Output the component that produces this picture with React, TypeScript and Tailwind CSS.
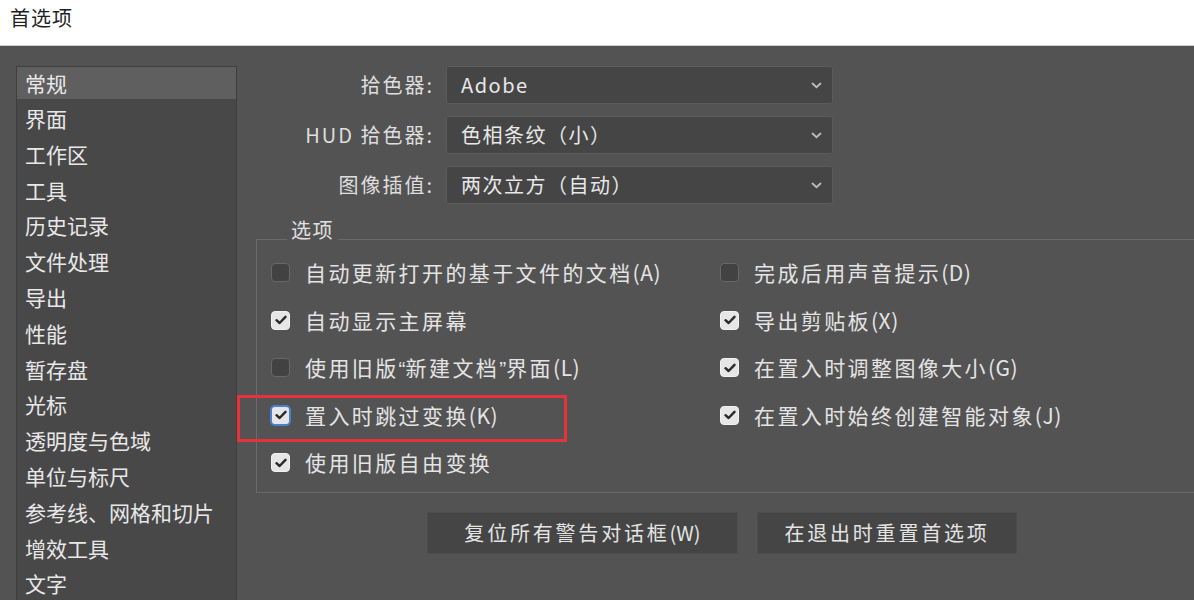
import React from 'react';

const font = { fontFamily: '"Noto Sans CJK SC", "Noto Sans", sans-serif' };

const navItems = [
  '常规', '界面', '工作区', '工具', '历史记录', '文件处理', '导出', '性能',
  '暂存盘', '光标', '透明度与色域', '单位与标尺', '参考线、网格和切片', '增效工具', '文字',
];

const pickers = [
  { label: '拾色器:', value: 'Adobe' },
  { label: 'HUD 拾色器:', value: '色相条纹（小）' },
  { label: '图像插值:', value: '两次立方（自动）' },
];

type Opt = { text: React.ReactNode; id: string; key?: string; checked: boolean; focus?: boolean };

const Q: React.FC<{ c: string }> = ({ c }) => (
  <span className="tracking-[0px]" style={{ fontFamily: '"Liberation Sans", sans-serif' }}>{c}</span>
);

const leftOpts: Opt[] = [
  { id: 'a', text: '自动更新打开的基于文件的文档', key: '(A)', checked: false },
  { id: 'b', text: '自动显示主屏幕', checked: true },
  {
    id: 'c',
    text: <>使用旧版<Q c="“" />新建文档<Q c="”" />界面</>,
    key: '(L)',
    checked: false,
  },
  { id: 'd', text: '置入时跳过变换', key: '(K)', checked: true, focus: true },
  { id: 'e', text: '使用旧版自由变换', checked: true },
];

const rightOpts: Opt[] = [
  { id: 'f', text: '完成后用声音提示', key: '(D)', checked: false },
  { id: 'g', text: '导出剪贴板', key: '(X)', checked: true },
  { id: 'h', text: '在置入时调整图像大小', key: '(G)', checked: true },
  { id: 'i', text: '在置入时始终创建智能对象', key: '(J)', checked: true },
];

const Checkbox: React.FC<{ checked: boolean; focus?: boolean }> = ({ checked, focus }) => (
  <span
    className={`flex w-[19px] h-[19px] shrink-0 items-center justify-center rounded-[4px] border ${
      checked ? 'bg-[#e6e6e6] border-[#f2f2f2]' : 'bg-[#424242] border-[#686868]'
    } ${focus ? 'outline outline-2 outline-[#4d7fd1] -outline-offset-1' : ''}`}
  >
    {checked && (
      <svg width="12" height="10" viewBox="0 0 12 10">
        <path d="M1.5 5.2 L4.6 8 L10.5 1.8" fill="none" stroke="#2a2a2a" strokeWidth="2.4" strokeLinecap="round" strokeLinejoin="round" />
      </svg>
    )}
  </span>
);

const OptionRow: React.FC<{ opt: Opt }> = ({ opt }) => (
  <div className="relative flex h-[47.5px] items-center gap-[15px]">
    <Checkbox checked={opt.checked} focus={opt.focus} />
    <span className="text-[21px] tracking-[2.4px] text-[#e4e4e4] whitespace-nowrap">
      {opt.text}
      {opt.key && <span className="tracking-[0.5px]">{opt.key}</span>}
    </span>
    {opt.focus && (
      <span className="absolute left-[-34px] top-[3px] w-[330px] h-[47px] border-[3px] border-[#e5323b] pointer-events-none" />
    )}
  </div>
);

export default function App() {
  return (
    <div className="w-[1194px] h-[600px] overflow-hidden flex flex-col bg-[#535353]" style={font}>
      {/* title bar */}
      <div className="h-[46px] shrink-0 bg-white border-b border-[#cfcfcf] pl-[10px] pt-[4px]">
        <span className="text-[20px] leading-[28px] tracking-[1px] text-[#1f1f1f]">首选项</span>
      </div>

      <div className="flex flex-1 pt-[20px]">
        {/* sidebar */}
        <div className="ml-[16px] w-[221px] h-[600px] shrink-0 bg-[#484848] border border-[#3f3f3f]">
          {navItems.map((item, i) => (
            <div
              key={item}
              className={`pl-[8px] text-[21px] text-[#e8e8e8] whitespace-nowrap ${
                i === 0 ? 'h-[32px] leading-[32px] bg-[#5f5f5f] mb-[2px]' : 'h-[35.8px] leading-[35.8px]'
              }`}
            >
              {item}
            </div>
          ))}
        </div>

        {/* main */}
        <div className="ml-[19px] flex-1 flex flex-col">
          <div className="flex flex-col gap-[12px]">
            {pickers.map(p => (
              <div key={p.label} className="flex items-center gap-[12px]">
                <div className="w-[178px] text-right text-[20px] tracking-[2px] text-[#dedede] whitespace-nowrap">
                  {p.label}
                </div>
                <div className="w-[387px] h-[38px] flex items-center justify-between pl-[14px] pr-[10px] rounded-[3px] bg-[#454545] border border-[#5b5b5b]">
                  <span className="text-[20px] tracking-[1.5px] text-[#e8e8e8]">{p.value}</span>
                  <svg width="11" height="7" viewBox="0 0 11 7">
                    <path d="M1.5 1.5 L5.5 5.2 L9.5 1.5" fill="none" stroke="#bdbdbd" strokeWidth="1.8" strokeLinecap="round" />
                  </svg>
                </div>
              </div>
            ))}
          </div>

          <fieldset className="mt-[16px] w-[960px] border border-[#6a6a6a] pl-[14px] pb-[5px]">
            <legend className="ml-[16px] px-[4px] pb-[18px] text-[20px] leading-[20px] tracking-[1.5px] text-[#e0e0e0]">选项</legend>
            <div className="flex mt-[-9px]">
              <div className="w-[449px] flex flex-col">
                {leftOpts.map(o => <OptionRow key={o.id} opt={o} />)}
              </div>
              <div className="flex flex-col">
                {rightOpts.map(o => <OptionRow key={o.id} opt={o} />)}
              </div>
            </div>
          </fieldset>

          <div className="mt-[19px] w-[932px] flex justify-center gap-[19px]">
            <button className="w-[311px] h-[42px] bg-[#454545] border border-[#4d4d4d] text-[20px] tracking-[2.8px] text-[#e4e4e4]">
              复位所有警告对话框<span className="tracking-[0px]">(W)</span>
            </button>
            <button className="w-[260px] h-[42px] bg-[#454545] border border-[#4d4d4d] text-[20px] tracking-[2.8px] text-[#e4e4e4]">
              在退出时重置首选项
            </button>
          </div>
        </div>
      </div>
    </div>
  );
}
